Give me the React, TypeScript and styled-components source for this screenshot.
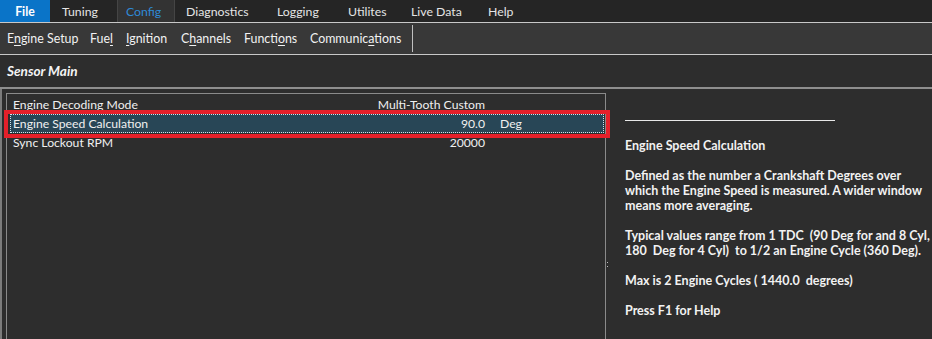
import React from "react";
import styled, { createGlobalStyle } from "styled-components";

const Global = createGlobalStyle`
  html, body { margin: 0; padding: 0; background: #2d2d2d; }
  body { font-family: Lato, "Open Sans", sans-serif; }
`;

const Window = styled.div`
  width: 932px;
  height: 339px;
  overflow: hidden;
  display: flex;
  flex-direction: column;
  background: #2d2d2d;
  color: #eeeeee;
  font-size: 12px;
`;

const MenuBar = styled.div`
  height: 22px;
  display: flex;
  align-items: stretch;
  background: #252525;
  border-bottom: 1px solid #c8c8c8;
  font-size: 12.3px;
`;

const MenuTab = styled.div<{ $kind?: "file" | "active"; $w: number; $pad: number }>`
  display: flex;
  align-items: center;
  justify-content: ${(p) => (p.$kind === "file" ? "center" : "flex-start")};
  width: ${(p) => p.$w}px;
  padding-left: ${(p) => p.$pad}px;
  box-sizing: border-box;
  white-space: nowrap;
  background: ${(p) =>
    p.$kind === "file" ? "#0a74c8" : p.$kind === "active" ? "#333333" : "transparent"};
  color: ${(p) => (p.$kind === "file" ? "#ffffff" : p.$kind === "active" ? "#2f8ad6" : "#e4e4e4")};
  font-weight: ${(p) => (p.$kind === "file" ? 700 : 400)};
  border-left: ${(p) => (p.$kind === "active" ? "1px solid #454545" : "none")};
  border-right: ${(p) => (p.$kind === "active" ? "1px solid #454545" : "none")};
`;

const ToolBar = styled.div`
  height: 31px;
  display: flex;
  align-items: center;
  background: #383838;
  border-bottom: 1px solid #c8c8c8;
  padding-left: 7px;
  font-size: 12.4px;
`;

const ToolItem = styled.span<{ $w: number }>`
  color: #f2f2f2;
  width: ${(p) => p.$w}px;
  white-space: nowrap;
`;

const U = styled.span`
  text-decoration: underline;
  text-underline-offset: 2px;
`;

const ToolSep = styled.div`
  width: 1px;
  height: 27px;
  background: #c0c0c0;
`;

const Header = styled.div`
  height: 32px;
  display: flex;
  align-items: center;
  padding-left: 7px;
  font-weight: 700;
  font-style: italic;
  font-size: 13.6px;
  color: #f4f4f4;
  border-bottom: 2px solid #8e8e8e;
`;

const Content = styled.div`
  flex: 1;
  display: flex;
  min-height: 0;
`;

const LeftPane = styled.div`
  width: 606px;
  flex-shrink: 0;
  border-left: 2px solid #7c7c7c;
  padding: 4px 0 0 4px;
  box-sizing: border-box;
  display: flex;
`;

const Grid = styled.div`
  flex: 1;
  border: 1px solid #8a8a8a;
  border-bottom: none;
  padding-top: 1px;
  position: relative;
  font-size: 12.2px;
`;

const Row = styled.div<{ $sel?: boolean }>`
  height: 19px;
  display: grid;
  grid-template-columns: 345px 130px 1fr;
  align-items: center;
  margin: 0 1px 0 3px;
  box-sizing: border-box;
  position: relative;
  white-space: nowrap;
  background: ${(p) => (p.$sel ? "#284656" : "transparent")};
  outline: ${(p) => (p.$sel ? "1px dotted #cfe3ee" : "none")};
  outline-offset: -1px;
`;

const Highlight = styled.div`
  position: absolute;
  left: -6px;
  right: -6px;
  top: -4px;
  bottom: -5px;
  border: 4px solid #e5202a;
  pointer-events: none;
`;

const Name = styled.span`
  padding-left: 3px;
  color: #f0f0f0;
`;

const Value = styled.span`
  text-align: right;
  color: #f0f0f0;
`;

const Unit = styled.span`
  padding-left: 15px;
  color: #f0f0f0;
`;

const RightPane = styled.div`
  flex: 1;
  min-width: 0;
  overflow: hidden;
  padding: 31px 0 0 19px;
  position: relative;
  white-space: nowrap;
`;

const Grip = styled.div`
  position: absolute;
  left: -1px;
  top: 173px;
  width: 3px;
  height: 3px;
  border-top: 1px dotted #bbbbbb;
  border-bottom: 1px dotted #bbbbbb;
`;

const HelpRule = styled.div`
  width: 210px;
  height: 1px;
  background: #e8e8e8;
  margin-bottom: 17px;
`;

const HelpPara = styled.p`
  margin: 0 0 15px 0;
  font-weight: 700;
  font-size: 12.5px;
  line-height: 15px;
  color: #f2f2f2;
`;

const menu = [
  { label: "Tuning", w: 67, pad: 12 },
  { label: "Config", w: 58, pad: 8, active: true },
  { label: "Diagnostics", w: 91, pad: 11 },
  { label: "Logging", w: 71, pad: 11 },
  { label: "Utilites", w: 63, pad: 11 },
  { label: "Live Data", w: 77, pad: 11 },
  { label: "Help", w: 60, pad: 11 },
];

export default function App() {
  return (
    <Window>
      <Global />
      <MenuBar>
        <MenuTab $kind="file" $w={50} $pad={0}>
          File
        </MenuTab>
        {menu.map((m) => (
          <MenuTab key={m.label} $kind={m.active ? "active" : undefined} $w={m.w} $pad={m.pad}>
            {m.label}
          </MenuTab>
        ))}
      </MenuBar>
      <ToolBar>
        <ToolItem $w={83}>
          E<U>n</U>gine Setup
        </ToolItem>
        <ToolItem $w={36}>
          Fue<U>l</U>
        </ToolItem>
        <ToolItem $w={55}>
          <U>I</U>gnition
        </ToolItem>
        <ToolItem $w={63}>
          C<U>h</U>annels
        </ToolItem>
        <ToolItem $w={66}>
          Functi<U>o</U>ns
        </ToolItem>
        <ToolItem $w={102}>
          Communic<U>a</U>tions
        </ToolItem>
        <ToolSep />
      </ToolBar>
      <Header>Sensor Main</Header>
      <Content>
        <LeftPane>
          <Grid>
            <Row>
              <Name>Engine Decoding Mode</Name>
              <Value>Multi-Tooth Custom</Value>
              <Unit />
            </Row>
            <Row $sel>
              <Name>Engine Speed Calculation</Name>
              <Value>90.0</Value>
              <Unit>Deg</Unit>
              <Highlight />
            </Row>
            <Row>
              <Name>Sync Lockout RPM</Name>
              <Value>20000</Value>
              <Unit />
            </Row>
          </Grid>
        </LeftPane>
        <RightPane>
          <Grip />
          <HelpRule />
          <HelpPara>Engine Speed Calculation</HelpPara>
          <HelpPara>
            Defined as the number a Crankshaft Degrees over
            <br />
            which the Engine Speed is measured. A wider window
            <br />
            means more averaging.
          </HelpPara>
          <HelpPara>
            Typical values range from 1 TDC&nbsp; (90 Deg for and 8 Cyl,
            <br />
            180&nbsp; Deg for 4 Cyl)&nbsp; to 1/2 an Engine Cycle (360 Deg).
          </HelpPara>
          <HelpPara>Max is 2 Engine Cycles ( 1440.0&nbsp; degrees)</HelpPara>
          <HelpPara>Press F1 for Help</HelpPara>
        </RightPane>
      </Content>
    </Window>
  );
}
